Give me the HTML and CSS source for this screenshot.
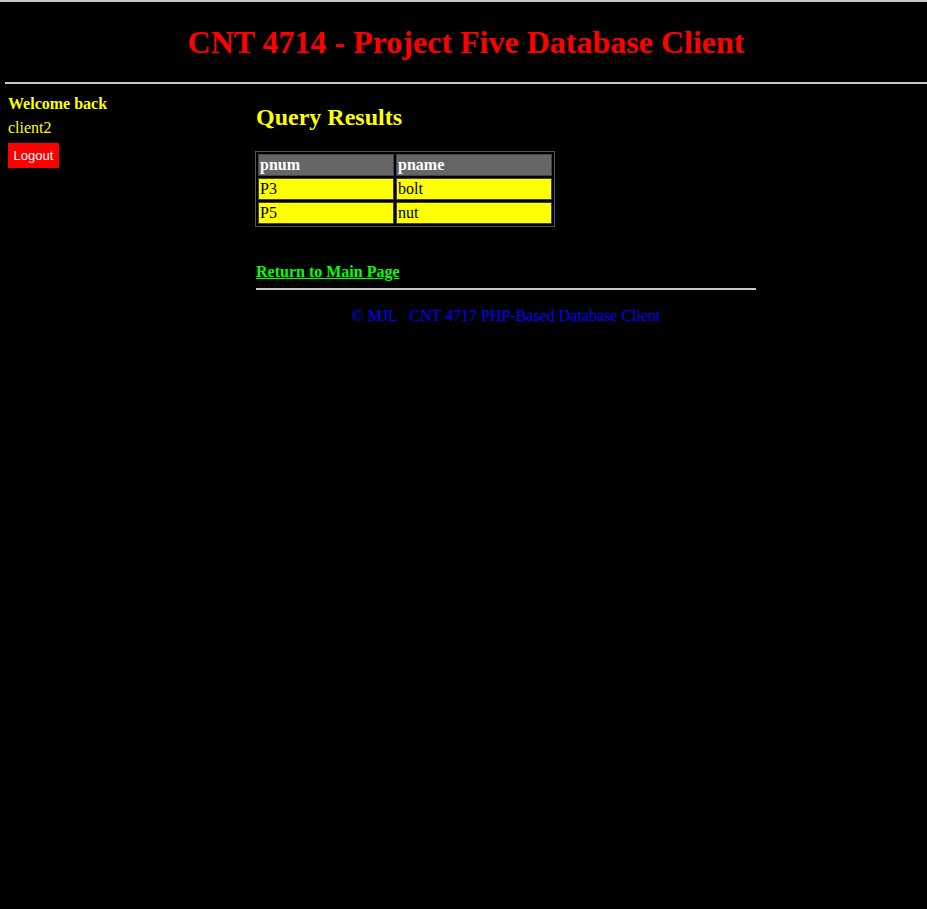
FILE: index.html
```html
<!DOCTYPE html>
<html>
<head>
<meta charset="utf-8">
<link rel="stylesheet" href="styles.css">
</head>
<body>
<div class="header">
  <h1 class="title">CNT 4714 - Project Five Database Client</h1>
</div>
<hr class="top-rule">
<div class="layout">
  <aside class="sidebar">
    <div class="welcome">Welcome back</div>
    <div class="user">client2</div>
    <button class="logout">Logout</button>
  </aside>
  <main class="content">
    <h2 class="results-title">Query Results</h2>
    <table class="results">
      <tr><th class="col1">pnum</th><th>pname</th></tr>
      <tr><td>P3</td><td>bolt</td></tr>
      <tr><td>P5</td><td>nut</td></tr>
    </table>
    <a class="back" href="#">Return to Main Page</a>
    <hr class="foot-rule">
    <div class="footer">© MJL &nbsp; CNT 4717 PHP-Based Database Client</div>
  </main>
</div>
</body>
</html>
```
FILE: styles.css
```css
html, body {
  margin: 0;
  padding: 0;
  background: #000;
}
body {
  border-top: 2px solid #c8c8c8;
  font-family: "Liberation Serif", "Times New Roman", serif;
  min-height: 907px;
}
.header {
  height: 80px;
  display: flex;
  align-items: center;
  justify-content: center;
}
.title {
  margin: 0 0 0 5px;
  color: #ff0000;
  font-size: 32px;
  font-weight: bold;
  line-height: 1;
}
.top-rule {
  margin: 0 0 0 5px;
  border: 0;
  border-top: 2px solid #c8c8c8;
  height: 0;
}
.layout {
  display: flex;
  padding-left: 8px;
}
.sidebar {
  width: 248px;
  flex: none;
  padding-top: 11px;
}
.welcome {
  color: #ffff00;
  font-weight: bold;
  font-size: 16px;
  line-height: 18px;
}
.user {
  color: #ffff00;
  font-size: 16px;
  line-height: 18px;
  margin-top: 6px;
}
.logout {
  display: block;
  margin-top: 6px;
  background: #ff0000;
  color: #fff;
  border: 0;
  font-family: "Liberation Sans", Arial, sans-serif;
  font-size: 13px;
  width: 51px;
  height: 25px;
  padding: 0;
}
.content {
  width: 500px;
  padding-top: 19px;
}
.results-title {
  margin: 0;
  color: #ffff00;
  font-size: 24px;
  line-height: 28px;
  font-weight: bold;
}
.results {
  margin-top: 20px;
  margin-left: -1px;
  width: 300px;
  border: 1px solid #555;
  border-spacing: 2px;
  font-size: 16px;
}
.results th, .results td {
  border: 1px solid #444;
  text-align: left;
  padding: 0 1px;
  line-height: 20px;
}
.results th {
  background: #666;
  color: #fff;
  font-weight: bold;
}
.results th.col1 {
  width: 132px;
}
.results td {
  background: #ffff00;
  color: #000;
}
.back {
  display: inline-block;
  margin-top: 36px;
  color: #00ff00;
  font-weight: bold;
  font-size: 16px;
  line-height: 18px;
}
.foot-rule {
  margin: 7px 0 0 0;
  border: 0;
  border-top: 2px solid #c8c8c8;
  height: 0;
}
.footer {
  margin-top: 17px;
  text-align: center;
  color: #0000ff;
  font-size: 16px;
  line-height: 18px;
}
```
